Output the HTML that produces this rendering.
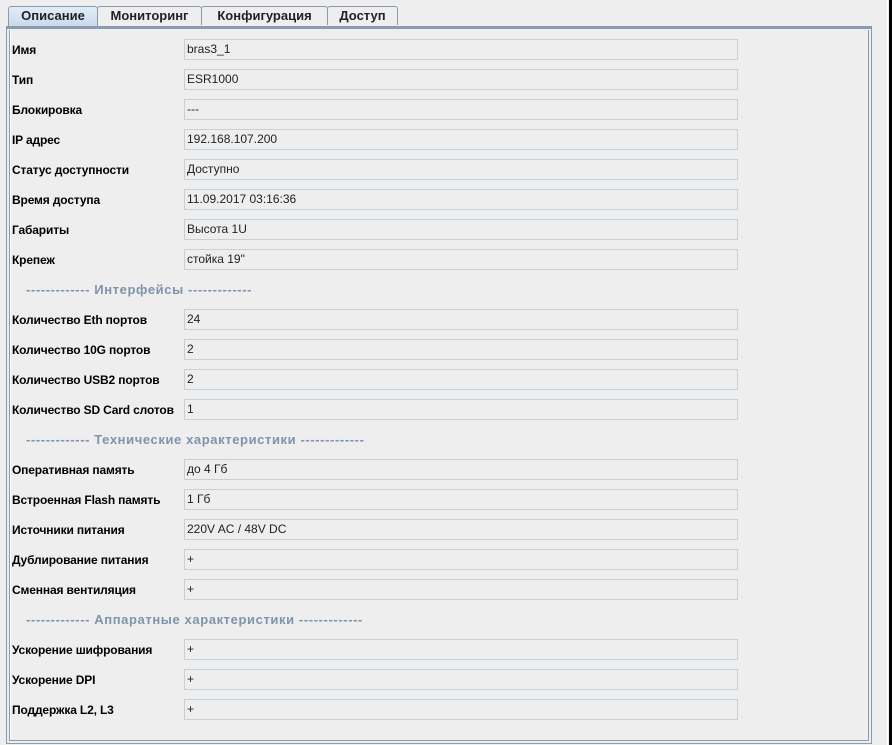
<!DOCTYPE html>
<html><head><meta charset="utf-8"><style>
body{margin:0;width:892px;height:745px;background:#eeeeee;position:relative;overflow:hidden;font-family:"Liberation Sans","DejaVu Sans",sans-serif}
.tab{position:absolute;top:6px;height:18px;border:1px solid #8a9bb0;border-bottom:none;background:#eeeeee;font-weight:bold;font-size:13px;line-height:18px;text-align:center;color:#222;border-radius:3px 3px 0 0}
.tab.sel{background:linear-gradient(#e2ecf7,#c8d9ec);height:20px}
.outer{position:absolute;left:6px;top:26px;width:864px;height:714px;border:1px solid #8a9bb0;border-top:3px solid #8a9bb0}
.inner{position:absolute;left:2px;top:1px;right:2px;bottom:2px;border:1px solid #8a9bb0;border-top:none;box-shadow:inset 1px 0 0 #fff}
.lab{position:absolute;left:12px;font-weight:bold;font-size:12px;color:#000;line-height:14px;letter-spacing:-0.15px}
.f{position:absolute;left:184px;width:554px;border:1px solid #c4d0dc;font-size:12px;line-height:19px;padding-left:2px;box-sizing:border-box;height:21px;color:#222}
.h{position:absolute;left:26px;font-weight:bold;font-size:13px;color:#7f93ad;line-height:14px;letter-spacing:0.6px}
.rs{position:absolute;left:887px;top:0;width:1px;height:745px;background:#fff}
.rb{position:absolute;left:889px;top:0;width:3px;height:745px;background:#000}
</style></head><body>
<div class="tab sel" style="left:8px;width:88px;">Описание</div>
<div class="tab" style="left:97px;width:103px;">Мониторинг</div>
<div class="tab" style="left:201px;width:125px;">Конфигурация</div>
<div class="tab" style="left:327px;width:69px;">Доступ</div>
<div class="outer"><div class="inner"></div></div>
<div class="rs"></div><div class="rb"></div>

<div class="lab" style="top:43px">Имя</div><div class="f" style="top:39px">bras3_1</div>
<div class="lab" style="top:73px">Тип</div><div class="f" style="top:69px">ESR1000</div>
<div class="lab" style="top:103px">Блокировка</div><div class="f" style="top:99px">---</div>
<div class="lab" style="top:133px">IP адрес</div><div class="f" style="top:129px">192.168.107.200</div>
<div class="lab" style="top:163px">Статус доступности</div><div class="f" style="top:159px">Доступно</div>
<div class="lab" style="top:193px">Время доступа</div><div class="f" style="top:189px">11.09.2017 03:16:36</div>
<div class="lab" style="top:223px">Габариты</div><div class="f" style="top:219px">Высота 1U</div>
<div class="lab" style="top:253px">Крепеж</div><div class="f" style="top:249px">стойка 19"</div>
<div class="h" style="top:283px">------------- Интерфейсы -------------</div>
<div class="lab" style="top:313px">Количество Eth портов</div><div class="f" style="top:309px">24</div>
<div class="lab" style="top:343px">Количество 10G портов</div><div class="f" style="top:339px">2</div>
<div class="lab" style="top:373px">Количество USB2 портов</div><div class="f" style="top:369px">2</div>
<div class="lab" style="top:403px">Количество SD Card слотов</div><div class="f" style="top:399px">1</div>
<div class="h" style="top:433px">------------- Технические характеристики -------------</div>
<div class="lab" style="top:463px">Оперативная память</div><div class="f" style="top:459px">до 4 Гб</div>
<div class="lab" style="top:493px">Встроенная Flash память</div><div class="f" style="top:489px">1 Гб</div>
<div class="lab" style="top:523px">Источники питания</div><div class="f" style="top:519px">220V AC / 48V DC</div>
<div class="lab" style="top:553px">Дублирование питания</div><div class="f" style="top:549px">+</div>
<div class="lab" style="top:583px">Сменная вентиляция</div><div class="f" style="top:579px">+</div>
<div class="h" style="top:613px">------------- Аппаратные характеристики -------------</div>
<div class="lab" style="top:643px">Ускорение шифрования</div><div class="f" style="top:639px">+</div>
<div class="lab" style="top:673px">Ускорение DPI</div><div class="f" style="top:669px">+</div>
<div class="lab" style="top:703px">Поддержка L2, L3</div><div class="f" style="top:699px">+</div>
</body></html>
